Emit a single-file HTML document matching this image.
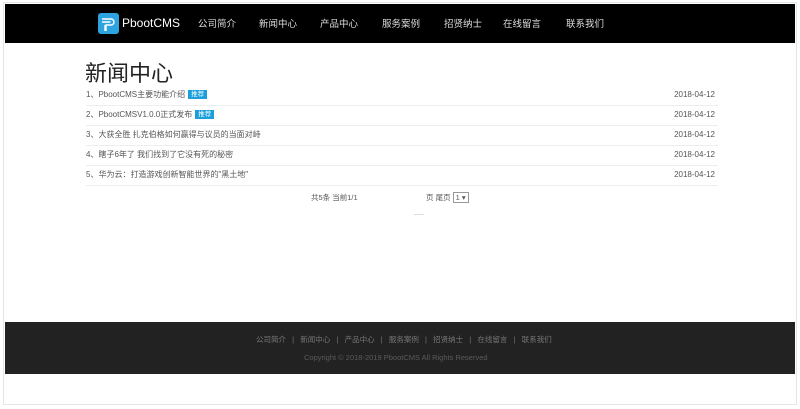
<!DOCTYPE html>
<html><head><meta charset="utf-8"><style>
body{margin:0;width:800px;height:409px;background:#fff;font-family:"Liberation Sans","Noto Sans CJK SC",sans-serif;position:relative;overflow:hidden}
.abs{position:absolute}
.hdr{left:5px;top:4px;width:790px;height:39px;background:#000}
.nav{top:16px;font-size:9.5px;color:#ddd}
.row{left:86px;width:632px;height:20px;border-bottom:1px solid #eee;font-size:8px;color:#555;line-height:20px}
.row .d{position:absolute;right:3px;top:0}
.tag{display:inline-block;background:#1a9fdc;color:#fff;font-size:6.5px;line-height:9px;padding:0 3px;margin-left:3px;vertical-align:1px}
.ft{left:5px;top:322px;width:790px;height:52px;background:#222}
</style></head><body>
<div class="abs" style="left:3px;top:2px;width:794px;height:403px;border:1px solid #e5e5e5;box-sizing:border-box"></div>
<div class="abs hdr"></div>
<svg class="abs" style="left:98px;top:13px" width="21" height="21" viewBox="0 0 21 21"><rect width="21" height="21" rx="3" fill="#2da4e0"/><path d="M4 6H13a3 3 0 0 1 0 6H8V18M4 9H12.5M7 12V18" stroke="#fff" stroke-width="1.4" fill="none"/></svg>
<div class="abs" style="left:122px;top:16px;color:#fff;font-size:12px">PbootCMS</div>
<div class="abs nav" style="left:198px">公司简介</div>
<div class="abs nav" style="left:259px">新闻中心</div>
<div class="abs nav" style="left:320px">产品中心</div>
<div class="abs nav" style="left:382px">服务案例</div>
<div class="abs nav" style="left:444px">招贤纳士</div>
<div class="abs nav" style="left:503px">在线留言</div>
<div class="abs nav" style="left:566px">联系我们</div>
<div class="abs" style="left:85px;top:56px;font-size:22px;color:#222">新闻中心</div>
<div class="abs row" style="top:85px">1、PbootCMS主要功能介绍<span class="tag">推荐</span><span class="d">2018-04-12</span></div>
<div class="abs row" style="top:105px">2、PbootCMSV1.0.0正式发布<span class="tag">推荐</span><span class="d">2018-04-12</span></div>
<div class="abs row" style="top:125px">3、大获全胜 扎克伯格如何赢得与议员的当面对峙<span class="d">2018-04-12</span></div>
<div class="abs row" style="top:145px">4、瞎子6年了 我们找到了它没有死的秘密<span class="d">2018-04-12</span></div>
<div class="abs row" style="top:165px">5、华为云：打造游戏创新智能世界的"黑土地"<span class="d">2018-04-12</span></div>
<div class="abs" style="left:311px;top:192px;font-size:7.5px;color:#555">共5条 当前1/1</div>
<div class="abs" style="left:426px;top:192px;font-size:7.5px;color:#555">页 尾页 <span style="border:1px solid #999;padding:0 2px">1 ▾</span></div>
<div class="abs" style="left:414px;top:214px;width:10px;height:1px;background:#ddd"></div>
<div class="abs ft"></div>
<div class="abs" style="left:256px;top:334px;font-size:7.5px;color:#777;word-spacing:1px">公司简介 &nbsp;| &nbsp;新闻中心 &nbsp;| &nbsp;产品中心 &nbsp;| &nbsp;服务案例 &nbsp;| &nbsp;招贤纳士 &nbsp;| &nbsp;在线留言 &nbsp;| &nbsp;联系我们</div>
<div class="abs" style="left:304px;top:353px;font-size:7.5px;color:#5a5a5a">Copyright © 2018-2019 PbootCMS All Rights Reserved</div>
</body></html>
